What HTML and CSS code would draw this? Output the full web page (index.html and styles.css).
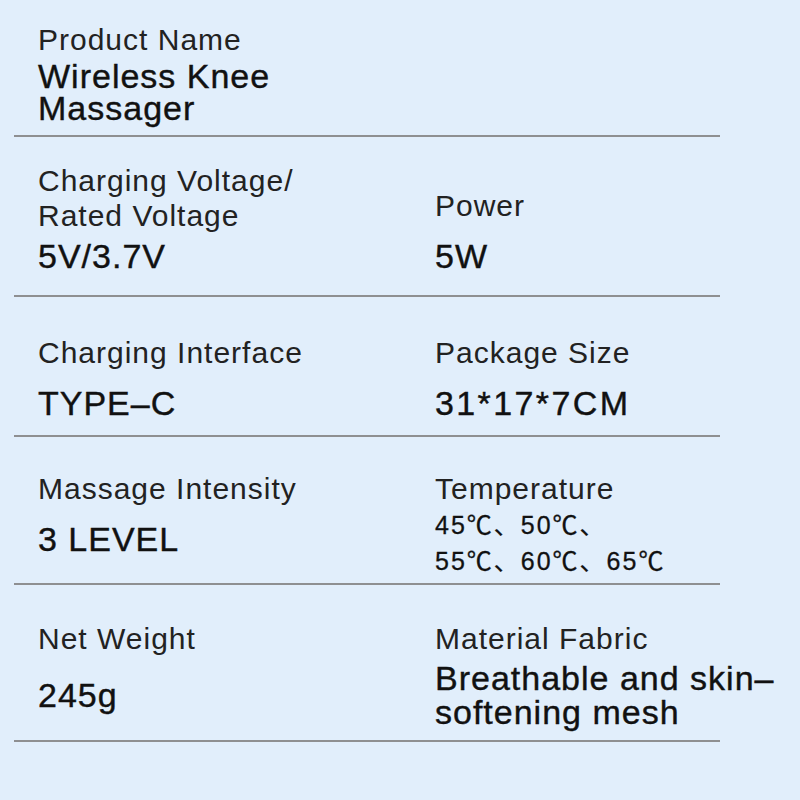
FILE: index.html
```html
<!DOCTYPE html>
<html lang="en">
<head>
<meta charset="utf-8">
<title>Wireless Knee Massager – Specifications</title>
<link rel="stylesheet" href="styles.css">
</head>
<body>
<main class="sheet">
  <section class="row row--name">
    <div class="cell">
      <p class="label">Product Name</p>
      <p class="value value--name">Wireless Knee<br>Massager</p>
    </div>
  </section>

  <section class="row row--voltage">
    <div class="cell">
      <p class="label">Charging Voltage/<br>Rated Voltage</p>
      <p class="value value--tight">5V/3.7V</p>
    </div>
    <div class="cell">
      <p class="label">Power</p>
      <p class="value value--gap">5W</p>
    </div>
  </section>

  <section class="row row--interface">
    <div class="cell">
      <p class="label">Charging Interface</p>
      <p class="value value--gap">TYPE–C</p>
    </div>
    <div class="cell">
      <p class="label">Package Size</p>
      <p class="value value--gap value--wide">31*17*7CM</p>
    </div>
  </section>

  <section class="row row--intensity">
    <div class="cell">
      <p class="label">Massage Intensity</p>
      <p class="value value--gap">3 LEVEL</p>
    </div>
    <div class="cell">
      <p class="label">Temperature</p>
      <p class="value value--small">45℃、50℃、<br>55℃、60℃、65℃</p>
    </div>
  </section>

  <section class="row row--weight">
    <div class="cell">
      <p class="label">Net Weight</p>
      <p class="value value--low">245g</p>
    </div>
    <div class="cell">
      <p class="label">Material Fabric</p>
      <p class="value value--fabric">Breathable and skin–<br>softening mesh</p>
    </div>
  </section>
</main>
</body>
</html>
```

FILE: styles.css
```css
html, body {
  margin: 0;
  padding: 0;
}

body {
  width: 800px;
  height: 800px;
  overflow: hidden;
  background: #e1eefb;
  color: #141414;
  font-family: "Liberation Sans", "Noto Sans CJK SC", sans-serif;
}

.sheet {
  width: 706px;
  margin-left: 14px;
}

.row {
  display: grid;
  grid-template-columns: 397px 1fr;
  padding-left: 24px;
  border-bottom: 2px solid #8e8f91;
}

.cell {
  display: flex;
  flex-direction: column;
  min-width: 0;
}

p {
  margin: 0;
}

.label {
  font-size: 30px;
  line-height: 35px;
  letter-spacing: 1px;
  color: #222;
}

.value {
  font-size: 34px;
  line-height: 34px;
  letter-spacing: 1px;
  white-space: nowrap;
  color: #111;
  -webkit-text-stroke: 0.4px #111;
}

/* row spacing */
.row--name {
  padding-top: 22px;
  padding-bottom: 11px;
}

.row--voltage {
  padding-top: 26px;
  padding-bottom: 22px;
  align-items: end;
}

.row--interface {
  padding-top: 38px;
  padding-bottom: 15px;
}

.row--intensity {
  padding-top: 34px;
  padding-bottom: 4px;
}

.row--weight {
  padding-top: 36px;
  padding-bottom: 11px;
}

/* value offsets */
.value--name {
  margin-top: 3px;
  line-height: 32px;
}

.value--tight {
  margin-top: 6px;
}

.value--gap {
  margin-top: 16px;
}

.value--wide {
  letter-spacing: 2.4px;
}

.value--small {
  margin-top: 1px;
  font-size: 25px;
  line-height: 36px;
  letter-spacing: 2px;
  -webkit-text-stroke: 0.3px #111;
}

.value--low {
  margin-top: 22px;
}

.value--fabric {
  margin-top: 5px;
}
```
